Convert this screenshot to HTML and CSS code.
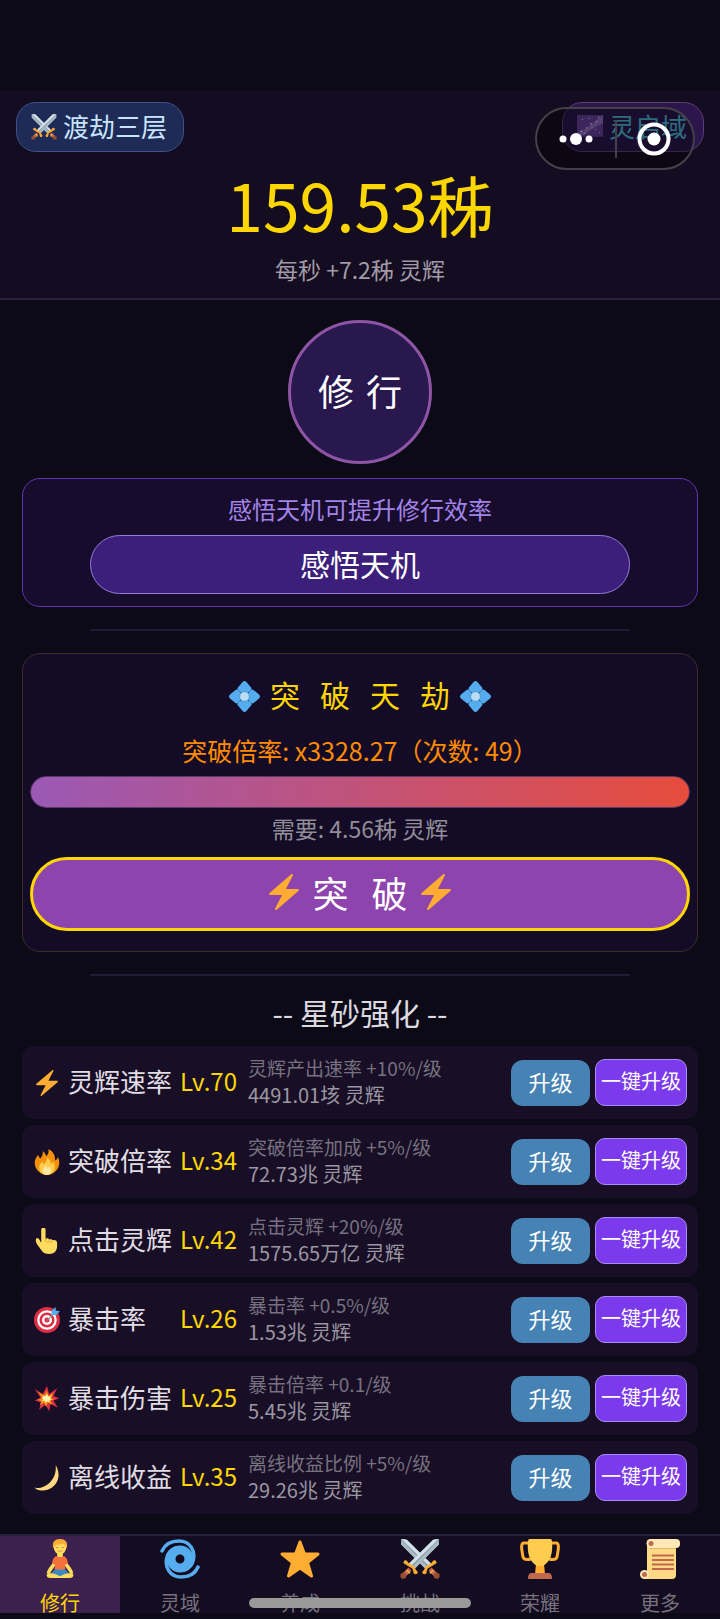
FILE: index.html
```html
<!DOCTYPE html>
<html lang="zh-CN">
<head>
    <meta charset="UTF-8">
    <meta name="viewport" content="width=device-width, initial-scale=1.0">
    <title>修行</title>
    <link rel="stylesheet" href="styles.css">
</head>
<body>
    <!-- Icon set -->
    <svg class="icon-defs" aria-hidden="true">
        <symbol id="i-bolt" viewBox="0 0 36 36">
            <path fill="#ffac33" d="M32.9 15.6c-.1-.4-.5-.6-.9-.6H19.9L26.9 1.5c.2-.4.1-1-.3-1.3-.4-.3-.9-.3-1.3 0L18 6.6 3.3 19.2c-.3.3-.4.7-.2 1.1.1.4.5.7.9.7h12.1L9.1 34.5c-.2.4-.1.9.3 1.2.4.3.9.3 1.3 0L18 29.4l14.6-12.6c.3-.3.5-.8.3-1.2z"/>
        </symbol>
        <symbol id="i-swords" viewBox="0 0 36 36">
            <g id="sword">
                <path fill="#8899a6" d="M1 0v5l22 22 4-4L6 1z"/>
                <path fill="#d5e1e9" d="M1 0l5 .5L28 22l-2 2z"/>
                <path fill="#aabbc5" d="M1 1v4l22 22 2-2z"/>
                <path stroke="#ffac33" stroke-width="2.6" stroke-linecap="round" d="M22 30c2-2 0-3 3-5s3-1 6-4"/>
                <path stroke="#bf6952" stroke-width="4" d="M27 27l5 5"/>
                <path stroke="#ffac33" stroke-width="1.5" d="M27 31l3-3"/>
                <circle cx="33" cy="33" r="2.7" fill="#9a4d30"/>
                <circle cx="22" cy="30" r="1.8" fill="#ffac33"/>
                <circle cx="31" cy="21" r="1.8" fill="#ffac33"/>
            </g>
            <use href="#sword" transform="matrix(-1 0 0 1 36 0)"/>
        </symbol>
        <symbol id="i-galaxy" viewBox="0 0 24 24">
            <path fill="#65409a" d="M0 1h24v20H0z"/>
            <path fill="#8f69bd" d="M0 18C7 15 14 9 24 1v7C16 12 10 17 3 21H0z"/>
            <g fill="#ecd8ff">
                <circle cx="4" cy="16" r=".8"/><circle cx="9" cy="13" r=".7"/><circle cx="13" cy="9" r=".8"/>
                <circle cx="18" cy="7" r=".7"/><circle cx="20" cy="3" r=".7"/><circle cx="5" cy="5" r=".5"/>
                <circle cx="11" cy="4" r=".5"/><circle cx="17" cy="14" r=".5"/><circle cx="21" cy="17" r=".5"/>
                <circle cx="7" cy="18" r=".6"/><circle cx="14" cy="12" r=".5"/>
            </g>
        </symbol>
        <symbol id="i-gem" viewBox="0 0 32 32">
            <path fill="#55acee" d="M16 0q1 0 2 1l5 6q1 1-1 3l-6 5-6-5q-2-2-1-3l5-6q1-1 2-1zM16 32q1 0 2-1l5-6q1-1-1-3l-6-5-6 5q-2 2-1 3l5 6q1 1 2 1zM0 16q0-1 1-2l6-5q1-1 3 1l5 6-5 6q-2 2-3 1l-6-5q-1-1-1-2zM32 16q0-1-1-2l-6-5q-1-1-3 1l-5 6 5 6q2 2 3 1l6-5q1-1 1-2z"/>
            <circle cx="16" cy="16" r="5" fill="#bbddf5" stroke="#3b88c3" stroke-width=".7"/>
        </symbol>
        <symbol id="i-fire" viewBox="0 0 36 36">
            <path fill="#f4900c" d="M35 19c0-3-.7-6-2-8-.5 3-2 4-4 5 1-7-3-13-9-16 1 5-1 8-3 10-1-3-2-5-5-7 1 4-1 7-3 10-2-1-3-3-3-5-3 3-5 7-5 11 0 9 8 17 17 17s17-8 17-17z"/>
            <path fill="#ffcc4d" d="M29 25c0-3-2-6-3-8 0 2-1 3-3 4 1-4-1-7-5-9 0 4-2 6-4 9-2-1-2-2-2-4-3 3-5 6-5 9 0 6 5 10 11 10s11-5 11-11z"/>
            <path fill="#ffe8a0" d="M24 30c0-3-2-4-3-6-1 2-2 2-3 2 0-2-1-3-2-4 0 3-4 4-4 8 0 3 3 6 6 6s6-3 6-6z"/>
        </symbol>
        <symbol id="i-hand" viewBox="0 0 36 36">
            <path fill="#ffdc5d" d="M10 2.500a2.500 2.500 0 0 1 6 0V15c2-1 4-1 5 1 2-1 4 0 5 1 3-1 6 1 6 4v4c0 7-4 11-11 11-5 0-8-1-10-4L4 22c-2-4-2-7 0-8 2 0 4 2 5 5l1 1z"/>
            <path fill="none" stroke="#ef9645" stroke-width="1" stroke-linecap="round" d="M16 15v4c1 1 4 1 5-1v-2M21 19c1 1 4 1 5-1"/>
        </symbol>
        <symbol id="i-target" viewBox="0 0 36 36">
            <circle cx="18" cy="18" r="18" fill="#dd2e44"/>
            <circle cx="18" cy="18" r="13.500" fill="#fff"/>
            <circle cx="18" cy="18" r="10.500" fill="#dd2e44"/>
            <circle cx="18" cy="18" r="7" fill="#fff"/>
            <circle cx="18" cy="18" r="3.500" fill="#dd2e44"/>
            <path stroke="#8899a6" stroke-width="1.500" d="M18 19L29 7"/>
            <path fill="#55acee" d="M24 11l1-7 5-4v5l6 1-5 5z"/>
        </symbol>
        <symbol id="i-burst" viewBox="0 0 36 36">
            <path fill="#dd2e44" d="M1 4l11 7 6-11 3 11 11-8-5 11 8 3-8 3 6 10-10-5-2 10-5-9-9 7 3-10-9-3 8-4z"/>
            <path fill="#f4900c" d="M6 8l8 5 4-7 2 8 7-5-3 8 5 1-6 2 3 6-7-3-2 6-3-6-6 4 2-6-5-2 6-2z"/>
            <path fill="#fff3b0" d="M12 13l4 1 2-3 2 4 4-2-2 4 3 1-4 2 1 3-4-2-2 3-1-4-4 1 2-3-3-1 3-2z"/>
        </symbol>
        <symbol id="i-moon" viewBox="0 0 36 36">
            <path fill="#ffd983" d="M30 0c4 7 5 14 3 20-3 10-14 17-25 15-3-.5-6-2-7-4 6 2 13 0 19-5C28 19 31 10 30 0z"/>
        </symbol>
        <symbol id="i-lotus" viewBox="0 0 28 42">
            <path fill="#ffdc5d" d="M11 13h6v6h-6zM7 24C5 28 1 31 0 36l3 1c2-4 5-7 7-11zM21 24c2 4 6 7 7 12l-3 1c-2-4-5-7-7-11z"/>
            <path fill="#f4703c" d="M10 18q4 2 8 0c3 1 4 4 4.500 8l-3 .500V33h-11v-6.500l-3-.500C6 22 7 19 10 18z"/>
            <path fill="#3b88c3" d="M8.500 32h11l5 5-8 3h-5l-8-3z"/>
            <path fill="#ffdc5d" d="M0 37c4-2 8-1 14 2 6-3 10-4 14-2 0 3-1 4-4 4H4c-3 0-4-1-4-4z"/>
            <ellipse cx="14" cy="9" rx="6.500" ry="7" fill="#ffdc5d"/>
            <path fill="#ffac33" d="M7 10C5 3 9 0 14 0s9 3 7 10c-1-3-2-4-3-5-3 1-6 1-8 1-1 1-2 2-3 4z"/>
            <path fill="none" stroke="#c1694f" stroke-width=".7" stroke-linecap="round" d="M10 9h2M16 9h2M12 12.500q2 1 4 0"/>
        </symbol>
        <symbol id="i-cyclone" viewBox="0 0 40 40">
            <circle cx="20" cy="20" r="9" fill="none" stroke="#55acee" stroke-width="9"/>
            <path fill="none" stroke="#55acee" stroke-width="3.500" stroke-linecap="round" d="M2 12C5 5 12 2 19 2c11 0 17 10 14 20-1 4-4 7-8 9M38 28c-3 7-10 10-17 10C10 38 4 28 7 18c1-4 4-7 8-9"/>
        </symbol>
        <symbol id="i-star" viewBox="0 0 40 40">
            <path fill="#ffac33" stroke="#ffac33" stroke-width="3" stroke-linejoin="round" d="M20 3l4.500 12H38L27.500 23.500 31.500 37 20 29 8.500 37l4-13.500L2 15h13.500z"/>
        </symbol>
        <symbol id="i-trophy" viewBox="0 0 40 40">
            <path fill="none" stroke="#ffac33" stroke-width="3" d="M10 4H4C0 4 2 12 3 18c1 3 4 3 8 2M30 4h6c4 0 2 8 1 14-1 3-4 3-8 2"/>
            <path fill="#ffac33" d="M16 25h8l1 10H15z"/>
            <path fill="#ffcc4d" d="M8 2q0-2 2-2h20q2 0 2 2c1 12-1 20-9 25h-6C9 22 7 14 8 2z"/>
            <path fill="#c1694f" d="M8 40c0-4 1-6 4-6h16c3 0 4 2 4 6z"/>
        </symbol>
        <symbol id="i-scroll" viewBox="0 0 40 40">
            <path fill="#ffd983" d="M7 2h29v34q0 4-4 4H4v-8h3z"/>
            <rect x="7" width="33" height="9" rx="4" fill="#ffe8b6"/>
            <path stroke="#e5b560" d="M10 9.500h26"/>
            <circle cx="11" cy="4.500" r="4.500" fill="#ffe8b6"/><circle cx="11" cy="4.500" r="2.500" fill="#c1694f"/>
            <circle cx="4.500" cy="35.500" r="4.500" fill="#ffe8b6"/><circle cx="4.500" cy="35.500" r="2.500" fill="#c1694f"/>
            <path stroke="#c1694f" stroke-width="1.800" d="M12 16.500h22M12 21h22M12 25.500h22M12 30h22"/>
        </symbol>
    </svg>

    <header class="header">
        <div class="badges">
            <div class="badge badge-realm"><svg class="icon"><use href="#i-swords"/></svg><span>渡劫三层</span></div>
            <div class="badge badge-domain"><svg class="icon"><use href="#i-galaxy"/></svg><span>灵启域</span></div>
        </div>
        <div class="total">159.53秭</div>
        <div class="per-second">每秒 +7.2秭 灵辉</div>
        <div class="capsule">
            <button class="capsule-btn" aria-label="更多操作">
                <svg width="34" height="14" viewBox="0 0 34 14" fill="#fff"><circle cx="4" cy="7" r="3.500"/><circle cx="17" cy="7" r="6"/><circle cx="30" cy="7" r="3.500"/></svg>
            </button>
            <button class="capsule-btn" aria-label="关闭">
                <svg width="34" height="34" viewBox="0 0 34 34"><circle cx="17" cy="17" r="14.500" fill="none" stroke="#fff" stroke-width="4"/><circle cx="17" cy="17" r="6.500" fill="#fff"/></svg>
            </button>
        </div>
    </header>

    <main class="content">
        <button class="practice-btn"><span>修</span> <span>行</span></button>

        <section class="card insight">
            <p class="insight-tip">感悟天机可提升修行效率</p>
            <button class="insight-btn">感悟天机</button>
        </section>

        <hr class="divider">

        <section class="card breakthrough">
            <h2 class="break-title">
                <svg class="icon"><use href="#i-gem"/></svg>
                <span class="spaced"><span>突</span> <span>破</span> <span>天</span> <span>劫</span></span>
                <svg class="icon"><use href="#i-gem"/></svg>
            </h2>
            <p class="break-rate">突破倍率: x3328.27（次数: 49）</p>
            <div class="progress" role="progressbar" aria-label="突破进度" aria-valuenow="100"><div class="progress-fill" style="width: 100%"></div></div>
            <p class="break-cost">需要: 4.56秭 灵辉</p>
            <button class="break-btn">
                <svg class="icon"><use href="#i-bolt"/></svg>
                <span class="spaced"><span>突</span> <span>破</span></span>
                <svg class="icon"><use href="#i-bolt"/></svg>
            </button>
        </section>

        <hr class="divider">

        <h2 class="section-title">-- 星砂强化 --</h2>
        <ul class="upgrades">
            <li class="upgrade">
                <svg class="icon"><use href="#i-bolt"/></svg>
                <span class="name">灵辉速率</span><span class="level">Lv.70</span>
                <div class="info"><p class="effect">灵辉产出速率 +10%/级</p><p class="cost">4491.01垓 灵辉</p></div>
                <button class="up-btn">升级</button><button class="max-btn">一键升级</button>
            </li>
            <li class="upgrade">
                <svg class="icon"><use href="#i-fire"/></svg>
                <span class="name">突破倍率</span><span class="level">Lv.34</span>
                <div class="info"><p class="effect">突破倍率加成 +5%/级</p><p class="cost">72.73兆 灵辉</p></div>
                <button class="up-btn">升级</button><button class="max-btn">一键升级</button>
            </li>
            <li class="upgrade">
                <svg class="icon"><use href="#i-hand"/></svg>
                <span class="name">点击灵辉</span><span class="level">Lv.42</span>
                <div class="info"><p class="effect">点击灵辉 +20%/级</p><p class="cost">1575.65万亿 灵辉</p></div>
                <button class="up-btn">升级</button><button class="max-btn">一键升级</button>
            </li>
            <li class="upgrade">
                <svg class="icon"><use href="#i-target"/></svg>
                <span class="name">暴击率</span><span class="level">Lv.26</span>
                <div class="info"><p class="effect">暴击率 +0.5%/级</p><p class="cost">1.53兆 灵辉</p></div>
                <button class="up-btn">升级</button><button class="max-btn">一键升级</button>
            </li>
            <li class="upgrade">
                <svg class="icon"><use href="#i-burst"/></svg>
                <span class="name">暴击伤害</span><span class="level">Lv.25</span>
                <div class="info"><p class="effect">暴击倍率 +0.1/级</p><p class="cost">5.45兆 灵辉</p></div>
                <button class="up-btn">升级</button><button class="max-btn">一键升级</button>
            </li>
            <li class="upgrade">
                <svg class="icon"><use href="#i-moon"/></svg>
                <span class="name">离线收益</span><span class="level">Lv.35</span>
                <div class="info"><p class="effect">离线收益比例 +5%/级</p><p class="cost">29.26兆 灵辉</p></div>
                <button class="up-btn">升级</button><button class="max-btn">一键升级</button>
            </li>
        </ul>
    </main>

    <nav class="tabbar">
        <a class="tab active" href="#practice"><svg class="icon"><use href="#i-lotus"/></svg><span>修行</span></a>
        <a class="tab" href="#domain"><svg class="icon"><use href="#i-cyclone"/></svg><span>灵域</span></a>
        <a class="tab" href="#growth"><svg class="icon"><use href="#i-star"/></svg><span>养成</span></a>
        <a class="tab" href="#challenge"><svg class="icon"><use href="#i-swords"/></svg><span>挑战</span></a>
        <a class="tab" href="#honor"><svg class="icon"><use href="#i-trophy"/></svg><span>荣耀</span></a>
        <a class="tab" href="#more"><svg class="icon"><use href="#i-scroll"/></svg><span>更多</span></a>
        <div class="home-indicator"></div>
    </nav>
</body>
</html>
```

FILE: styles.css
```css
* {
    box-sizing: border-box;
}
body {
    margin: 0;
    padding-top: 91px;
    min-height: 100vh;
    display: flex;
    flex-direction: column;
    background: #0d0a18;
    color: #fff;
    font-family: "Noto Sans CJK SC", sans-serif;
    font-weight: 400;
}
p, h2, ul {
    margin: 0;
    padding: 0;
    font-weight: 400;
}
button {
    padding: 0 0 4px;
    border: none;
    color: #fff;
    font-family: inherit;
    cursor: pointer;
}
.icon {
    display: block;
    flex: none;
}
.icon-defs {
    position: absolute;
    width: 0;
    height: 0;
}

/* Header */
.header {
    position: relative;
    padding: 11px 16px 16px;
    background: #140c20;
    border-bottom: 2px solid #28203e;
    text-align: center;
}
.badges {
    display: flex;
    justify-content: space-between;
}
.badge {
    display: flex;
    align-items: center;
    gap: 6px;
    height: 50px;
    padding: 0 16px 0 14px;
    border: 1px solid #3f5288;
    border-radius: 20px;
    font-size: 26px;
}
.badge span {
    padding-bottom: 4px;
}
.badge .icon {
    width: 26px;
    height: 26px;
}
.badge-realm {
    background: #1e2b57;
    color: #c8e4fc;
}
.badge-domain {
    background: #2b174b;
    border-color: #5a3f70;
    color: #4bb4d2;
}
.total {
    color: #ffd700;
    font-size: 66px;
    line-height: 102px;
}
.per-second {
    padding-top: 2px;
    color: #a09ba6;
    font-size: 23px;
    line-height: 26px;
}
.capsule {
    position: absolute;
    top: 16px;
    right: 25px;
    display: flex;
    width: 160px;
    height: 63px;
    border: 2px solid #464049;
    border-radius: 32px;
    background: rgba(0, 0, 0, 0.4);
}
.capsule-btn {
    flex: 1;
    display: flex;
    align-items: center;
    justify-content: center;
    padding: 0;
    background: none;
}
.capsule-btn + .capsule-btn::before {
    content: "";
    position: absolute;
    left: 50%;
    width: 2px;
    height: 38px;
    background: #464049;
}

/* Content */
.content {
    display: flex;
    flex-direction: column;
    padding: 20px 22px;
}
.practice-btn {
    display: flex;
    align-items: center;
    justify-content: center;
    align-self: center;
    gap: 12px;
    width: 144px;
    height: 144px;
    margin-bottom: 14px;
    border: 3px solid #8e55a6;
    border-radius: 50%;
    background: #29184e;
    font-size: 36px;
}
.card {
    border: 1px solid;
    border-radius: 18px;
}
.insight {
    padding: 14px 0 12px;
    background: #180c2c;
    border-color: #6333b4;
    text-align: center;
}
.insight-tip {
    margin-bottom: 10px;
    color: #a284e8;
    font-size: 24px;
    line-height: 32px;
}
.insight-btn {
    width: 80%;
    height: 59px;
    border: 1px solid #967bdc;
    border-radius: 30px;
    background: #3b1f7a;
    font-size: 30px;
}
.divider {
    width: 80%;
    height: 2px;
    margin: 22px auto;
    border: none;
    background: #211b36;
}
.breakthrough {
    padding: 20px 7px;
    background: #140b27;
    border-color: #3a2e2b;
    text-align: center;
}
.break-title {
    display: flex;
    align-items: center;
    justify-content: center;
    gap: 10px;
    margin-bottom: 12px;
    color: #ffd700;
    font-size: 30px;
    line-height: 44px;
}
.break-title .icon {
    width: 31px;
    height: 31px;
}
.spaced {
    display: flex;
    gap: 20px;
}
.break-title .spaced {
    padding-bottom: 4px;
    line-height: 40px;
}
.break-rate {
    margin-bottom: 6px;
    color: #ff8c00;
    font-size: 25px;
    line-height: 40px;
}
.progress {
    height: 32px;
    margin-bottom: 4px;
    border: 1px solid #5a3a66;
    border-radius: 16px;
    background: #1a1030;
    overflow: hidden;
}
.progress-fill {
    height: 100%;
    background: linear-gradient(90deg, #9b59b6, #e74c3c);
}
.break-cost {
    margin-bottom: 13px;
    color: #928e98;
    font-size: 23px;
    line-height: 32px;
}
.break-btn {
    display: flex;
    align-items: center;
    justify-content: center;
    gap: 10px;
    width: 100%;
    height: 74px;
    border: 3px solid #ffd700;
    border-radius: 37px;
    background: #8e44ad;
    font-size: 36px;
}
.break-btn .icon {
    width: 36px;
    height: 36px;
}
.break-btn .spaced {
    gap: 23px;
}
.section-title {
    margin-bottom: 20px;
    color: #dddae0;
    font-size: 30px;
    line-height: 28px;
    text-align: center;
}

/* Upgrade list */
.upgrades {
    display: flex;
    flex-direction: column;
    gap: 6px;
    list-style: none;
}
.upgrade {
    display: flex;
    align-items: center;
    height: 73px;
    padding: 0 11px 0 12px;
    border-radius: 12px;
    background: #180f26;
}
.upgrade .icon {
    width: 26px;
    height: 26px;
    margin-right: 8px;
}
.name {
    width: 112px;
    padding-bottom: 4px;
    color: #e0dde4;
    font-size: 26px;
}
.level {
    width: 68px;
    padding-bottom: 4px;
    color: #ffd700;
    font-size: 24px;
}
.info {
    flex: 1;
    padding-bottom: 4px;
    white-space: nowrap;
}
.effect {
    color: #777180;
    font-size: 19px;
    line-height: 27px;
}
.cost {
    color: #9b96a2;
    font-size: 20px;
    line-height: 27px;
}
.up-btn {
    width: 79px;
    height: 46px;
    margin-right: 5px;
    border-radius: 12px;
    background: #4682b4;
    font-size: 22px;
}
.max-btn {
    width: 92px;
    height: 47px;
    border: 1px solid #a78bfa;
    border-radius: 10px;
    background: #7c3aed;
    font-size: 20px;
    white-space: nowrap;
}

/* Bottom tabs */
.tabbar {
    position: relative;
    display: flex;
    margin-top: auto;
    margin-bottom: 6px;
    border-top: 2px solid #28203e;
    background: #140c20;
}
.tab {
    flex: 1;
    display: flex;
    flex-direction: column;
    align-items: center;
    gap: 11px;
    height: 77px;
    padding-top: 3px;
    color: #77727e;
    font-size: 20px;
    line-height: 26px;
    text-decoration: none;
}
.tab .icon {
    width: 40px;
    height: 40px;
}
.tab.active {
    background: #3c204e;
    color: #ffd700;
}
.home-indicator {
    position: absolute;
    left: 50%;
    bottom: 5px;
    width: 222px;
    height: 10px;
    border-radius: 5px;
    background: #999;
    transform: translateX(-50%);
}
```
